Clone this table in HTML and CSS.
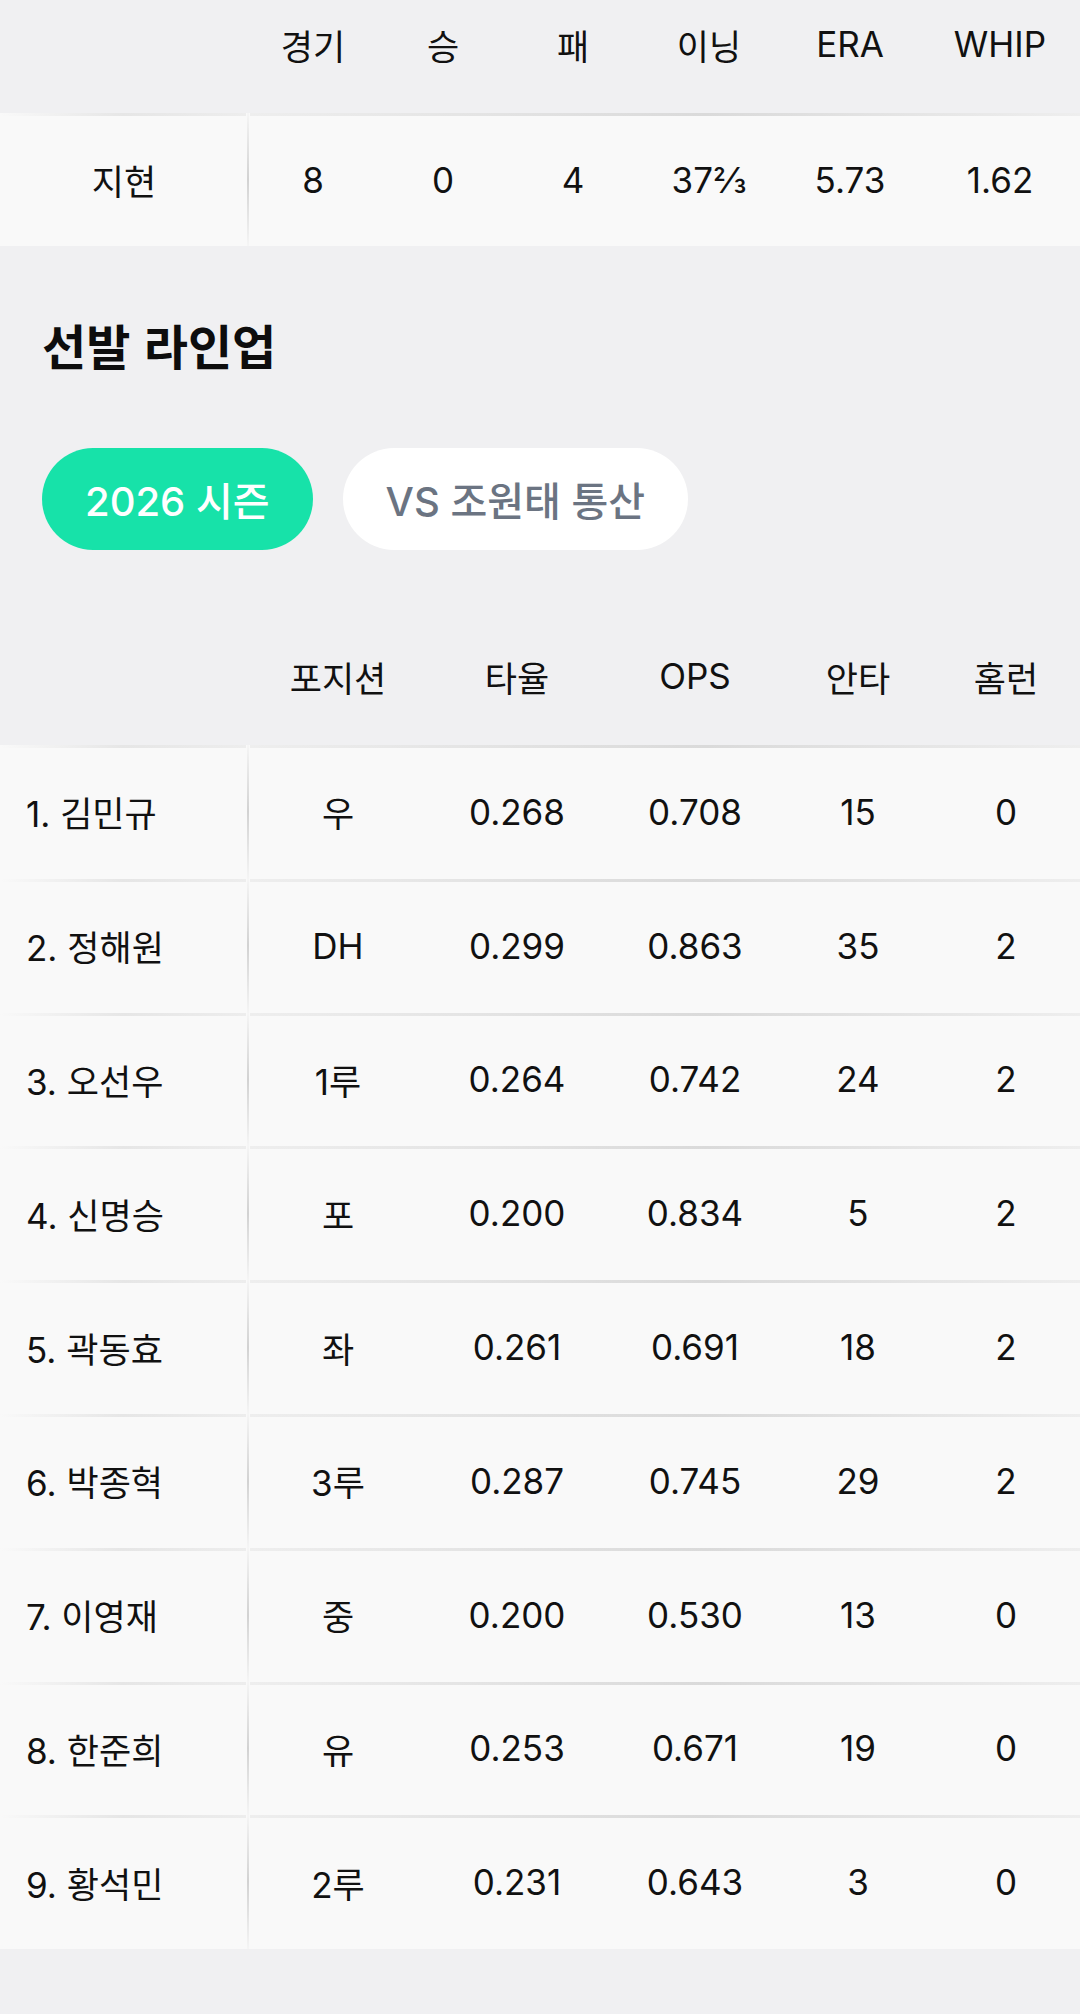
FILE: index.html
```html
<!DOCTYPE html>
<html lang="ko">
<head>
<meta charset="utf-8">
<link rel="stylesheet" href="styles.css">
</head>
<body>
<div class="page">
  <div class="table pitcher">
    <div class="thead">
      <div class="cell first"></div>
      <div class="cell">경기</div>
      <div class="cell">승</div>
      <div class="cell">패</div>
      <div class="cell">이닝</div>
      <div class="cell">ERA</div>
      <div class="cell">WHIP</div>
    </div>
    <div class="trow">
      <div class="cell first center">지현</div>
      <div class="cell">8</div>
      <div class="cell">0</div>
      <div class="cell">4</div>
      <div class="cell">37⅔</div>
      <div class="cell">5.73</div>
      <div class="cell">1.62</div>
    </div>
  </div>

  <h2 class="title">선발 라인업</h2>

  <div class="tabs">
    <div class="pill active">2026 시즌</div>
    <div class="pill">VS 조원태 통산</div>
  </div>

  <div class="table lineup">
    <div class="thead">
      <div class="cell first"></div>
      <div class="cell">포지션</div>
      <div class="cell">타율</div>
      <div class="cell">OPS</div>
      <div class="cell">안타</div>
      <div class="cell">홈런</div>
    </div>
    <div class="trow"><div class="cell first">1. 김민규</div><div class="cell">우</div><div class="cell">0.268</div><div class="cell">0.708</div><div class="cell">15</div><div class="cell">0</div></div>
    <div class="trow"><div class="cell first">2. 정해원</div><div class="cell">DH</div><div class="cell">0.299</div><div class="cell">0.863</div><div class="cell">35</div><div class="cell">2</div></div>
    <div class="trow"><div class="cell first">3. 오선우</div><div class="cell">1루</div><div class="cell">0.264</div><div class="cell">0.742</div><div class="cell">24</div><div class="cell">2</div></div>
    <div class="trow"><div class="cell first">4. 신명승</div><div class="cell">포</div><div class="cell">0.200</div><div class="cell">0.834</div><div class="cell">5</div><div class="cell">2</div></div>
    <div class="trow"><div class="cell first">5. 곽동효</div><div class="cell">좌</div><div class="cell">0.261</div><div class="cell">0.691</div><div class="cell">18</div><div class="cell">2</div></div>
    <div class="trow"><div class="cell first">6. 박종혁</div><div class="cell">3루</div><div class="cell">0.287</div><div class="cell">0.745</div><div class="cell">29</div><div class="cell">2</div></div>
    <div class="trow"><div class="cell first">7. 이영재</div><div class="cell">중</div><div class="cell">0.200</div><div class="cell">0.530</div><div class="cell">13</div><div class="cell">0</div></div>
    <div class="trow"><div class="cell first">8. 한준희</div><div class="cell">유</div><div class="cell">0.253</div><div class="cell">0.671</div><div class="cell">19</div><div class="cell">0</div></div>
    <div class="trow"><div class="cell first">9. 황석민</div><div class="cell">2루</div><div class="cell">0.231</div><div class="cell">0.643</div><div class="cell">3</div><div class="cell">0</div></div>
  </div>
</div>
</body>
</html>
```
FILE: styles.css
```css
* { box-sizing: border-box; }
html, body { margin: 0; padding: 0; }
body {
  background: #f0f0f2;
  font-family: Inter, "Noto Sans CJK KR", sans-serif;
  color: #111111;
  width: 1080px;
  min-height: 2014px;
}
.page { display: flex; flex-direction: column; }

.table { display: flex; flex-direction: column; }
.thead, .trow { display: grid; }
.pitcher .thead, .pitcher .trow {
  grid-template-columns: 248px 130px 130px 130px 142px 140px 1fr;
}
.lineup .thead, .lineup .trow {
  grid-template-columns: 248px 180px 178px 178px 148px 1fr;
}
.thead { height: 113px; }
.thead .cell { padding-bottom: 25px; }
.cell {
  display: flex;
  align-items: center;
  justify-content: center;
  font-size: 35px;
  font-weight: 400;
  white-space: nowrap;
}
.cell.first { justify-content: flex-start; padding-left: 26px; }
.cell.first.center { justify-content: center; padding-left: 0; }

.pitcher .trow { height: 133px; }
.lineup .trow { height: 133.8px; }
.trow {
  background:
    linear-gradient(to right, rgba(225,225,225,0), #e6e6e6 50%, rgba(225,225,225,0.5)) 0 0 / 246px 3px no-repeat,
    linear-gradient(to right, #eeeeee, #dadada 55%, #eeeeee) 250px 0 / 830px 3px no-repeat,
    linear-gradient(to bottom, #f5f5f5, #d2d2d2 50%, #f5f5f5) 247px 0 / 2px 100% no-repeat,
    #f9f9f9;
}

.title {
  margin: 68px 0 0 42px;
  font-family: "Noto Sans CJK KR", sans-serif;
  font-size: 48px;
  font-weight: 700;
  line-height: 60px;
  height: 60px;
  color: #0d0d0d;
}

.tabs {
  display: flex;
  gap: 30px;
  margin: 74px 0 0 42px;
}
.pill {
  height: 102px;
  border-radius: 51px;
  padding: 0 43px;
  display: flex;
  align-items: center;
  font-size: 40px;
  font-weight: 500;
  background: #ffffff;
  color: #6b7482;
}
.pill.active {
  background: #17e2a9;
  color: #ffffff;
}
.lineup { margin-top: 82px; }
```
